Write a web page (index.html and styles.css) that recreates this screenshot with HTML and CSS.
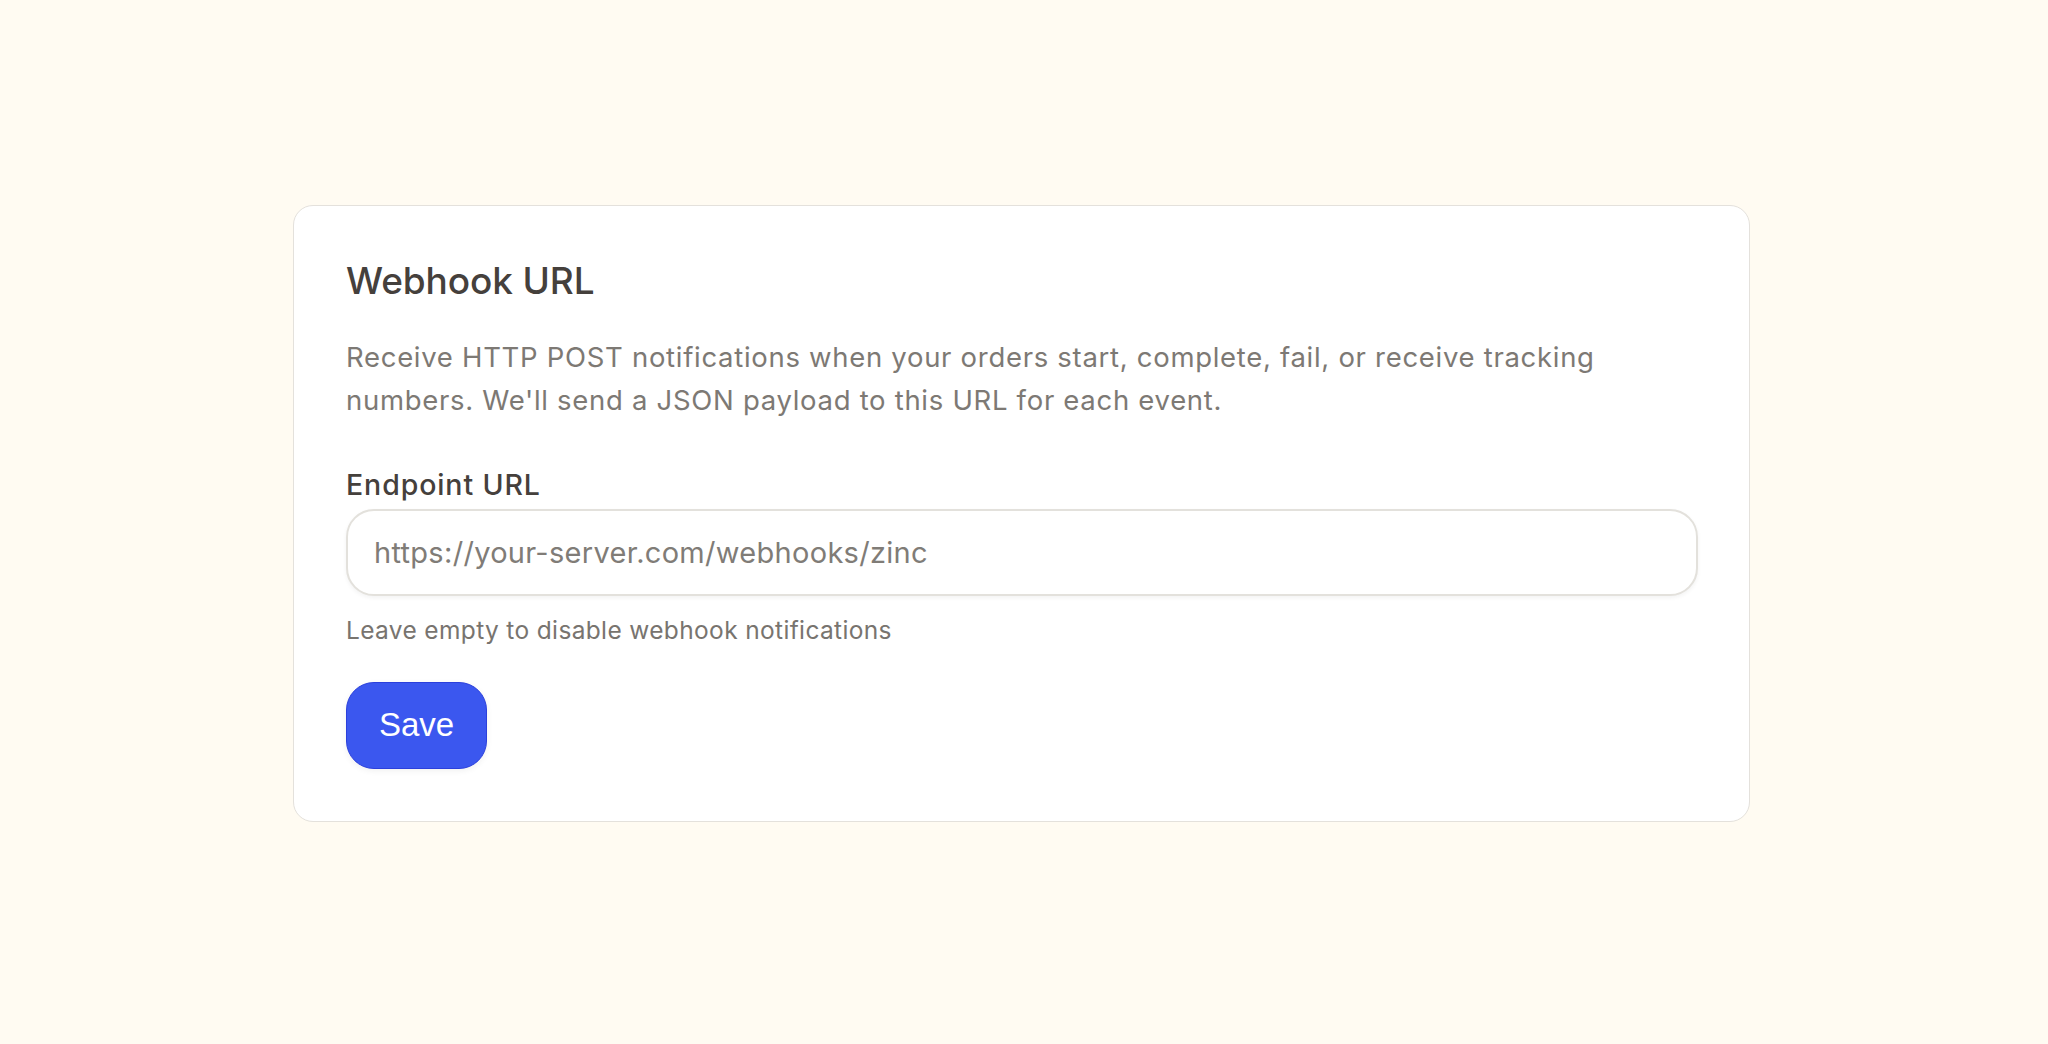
FILE: index.html
```html
<!DOCTYPE html>
<html lang="en">
<head>
<meta charset="utf-8">
<title>Webhook URL</title>
<link rel="stylesheet" href="styles.css">
</head>
<body>
<main class="page">
  <section class="card">
    <h2 class="card-title">Webhook URL</h2>
    <p class="card-desc">Receive HTTP POST notifications when your orders start, complete, fail, or receive tracking numbers. We'll send a JSON payload to this URL for each event.</p>
    <div class="field">
      <label class="field-label" for="endpoint">Endpoint URL</label>
      <input class="field-input" id="endpoint" type="text" placeholder="https://your-server.com/webhooks/zinc">
      <p class="field-help">Leave empty to disable webhook notifications</p>
    </div>
    <button class="btn-save" type="button">Save</button>
  </section>
</main>
</body>
</html>
```
FILE: styles.css
```css
* { box-sizing: border-box; }
html, body { margin: 0; padding: 0; }
body {
  background: #fffbf2;
  font-family: Inter, "Noto Sans", sans-serif;
  color: #45403c;
}
.page {
  min-height: 100vh;
  display: flex;
  align-items: center;
  justify-content: center;
  padding: 0 5px 18px 0;
}
.card {
  width: 1457px;
  background: #ffffff;
  border: 1.5px solid #e4e1dc;
  border-radius: 20px;
  padding: 51px 51px 52px 52px;
  display: flex;
  flex-direction: column;
  align-items: flex-start;
}
.card-title {
  margin: 0;
  font-size: 37px;
  line-height: 48px;
  font-weight: 500;
  color: #45403c;
  letter-spacing: -0.1px;
}
.card-desc {
  margin: 31px 0 0;
  font-size: 27.5px;
  line-height: 43px;
  letter-spacing: 0.7px;
  color: #7d7974;
  max-width: 1300px;
}
.field {
  margin-top: 43px;
  width: 100%;
  display: flex;
  flex-direction: column;
}
.field-label {
  font-size: 28.5px;
  line-height: 40px;
  font-weight: 500;
  letter-spacing: 0.9px;
  color: #45403c;
}
.field-input {
  margin-top: 4px;
  width: 100%;
  height: 87px;
  border: 2px solid #e3e1dc;
  border-radius: 28px;
  padding: 0 26px;
  font-family: inherit;
  font-size: 29px;
  letter-spacing: 0.3px;
  color: #45403c;
  background: #fff;
  box-shadow: 0 2px 4px rgba(0,0,0,0.05);
  outline: none;
}
.field-input::placeholder { color: #807c77; }
.field-help {
  margin: 18px 0 0;
  font-size: 24.5px;
  line-height: 32px;
  letter-spacing: 0.35px;
  color: #78746f;
}
.btn-save {
  margin-top: 36px;
  height: 87px;
  padding: 0 32px;
  background: #3b57ef;
  border: 1.5px solid #2b40dc;
  border-radius: 28px;
  color: #fff;
  font-family: "Liberation Sans", Arial, sans-serif;
  font-size: 33px;
  box-shadow: 0 2px 6px rgba(0,0,0,0.06);
}
```
